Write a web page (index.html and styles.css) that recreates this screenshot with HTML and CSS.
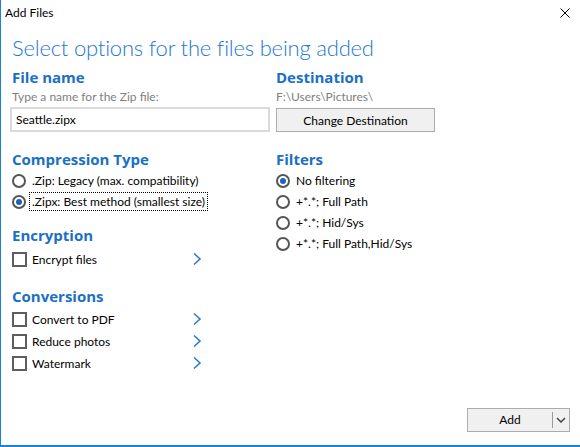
FILE: index.html
```html
<!DOCTYPE html>
<html lang="en">
<head>
  <meta charset="UTF-8">
  <title>Add Files</title>
  <link rel="stylesheet" href="styles.css">
</head>
<body>
  <div class="window">
    <div class="titlebar">
      <span>Add Files</span>
      <svg class="close" width="10" height="10" viewBox="0 0 10 10"><path d="M0.5 0.5 L9.5 9.5 M9.5 0.5 L0.5 9.5" stroke="#000" stroke-width="1" fill="none"/></svg>
    </div>

    <div class="content">
      <h1>Select options for the files being added</h1>

      <div class="grid">
        <div class="cell">
          <div class="label">File name</div>
          <div class="hint">Type a name for the Zip file:</div>
          <input class="textbox" type="text" value="Seattle.zipx">
        </div>
        <div class="cell">
          <div class="label">Destination</div>
          <div class="hint">F:\Users\Pictures\</div>
          <button class="btn">Change Destination</button>
        </div>

        <div class="cell section">
          <div class="label">Compression Type</div>
          <div class="options">
            <div class="row"><span class="radio"></span><span class="text">.Zip: Legacy (max. compatibility)</span></div>
            <div class="row"><span class="radio checked"></span><span class="text focus">.Zipx: Best method (smallest size)</span></div>
          </div>

          <div class="label block-gap">Encryption</div>
          <div class="checks">
            <div class="row check-row">
              <span class="check"></span><span class="text">Encrypt files</span>
              <svg class="chev" width="10" height="14" viewBox="0 0 10 14"><path d="M2 1.5 L8 7 L2 12.5" stroke="#2e7bcf" stroke-width="1.6" fill="none"/></svg>
            </div>
          </div>

          <div class="label block-gap2">Conversions</div>
          <div class="checks tight">
            <div class="row check-row">
              <span class="check"></span><span class="text">Convert to PDF</span>
              <svg class="chev" width="10" height="14" viewBox="0 0 10 14"><path d="M2 1.5 L8 7 L2 12.5" stroke="#2e7bcf" stroke-width="1.6" fill="none"/></svg>
            </div>
            <div class="row check-row">
              <span class="check"></span><span class="text">Reduce photos</span>
              <svg class="chev" width="10" height="14" viewBox="0 0 10 14"><path d="M2 1.5 L8 7 L2 12.5" stroke="#2e7bcf" stroke-width="1.6" fill="none"/></svg>
            </div>
            <div class="row check-row">
              <span class="check"></span><span class="text">Watermark</span>
              <svg class="chev" width="10" height="14" viewBox="0 0 10 14"><path d="M2 1.5 L8 7 L2 12.5" stroke="#2e7bcf" stroke-width="1.6" fill="none"/></svg>
            </div>
          </div>
        </div>

        <div class="cell section">
          <div class="label">Filters</div>
          <div class="options">
            <div class="row"><span class="radio checked"></span><span class="text">No filtering</span></div>
            <div class="row"><span class="radio"></span><span class="text">+*.*; Full Path</span></div>
            <div class="row"><span class="radio"></span><span class="text">+*.*; Hid/Sys</span></div>
            <div class="row"><span class="radio"></span><span class="text">+*.*; Full Path,Hid/Sys</span></div>
          </div>
        </div>
      </div>
    </div>

    <div class="footer">
      <div class="split-btn">
        <span class="main">Add</span>
        <span class="divider"></span>
        <span class="drop"><svg width="10" height="6" viewBox="0 0 10 6"><path d="M1 1 L5 5 L9 1" stroke="#444" stroke-width="1.5" fill="none"/></svg></span>
      </div>
    </div>
  </div>
</body>
</html>
```

FILE: styles.css
```css
body {
  margin: 0;
  font-family: Lato, "Noto Sans", sans-serif;
  font-size: 12px;
  color: #000;
  background: #fff;
}

.window {
  width: 580px;
  height: 447px;
  box-sizing: border-box;
  border-left: 1px solid #1883d7;
  border-bottom: 2px solid #1883d7;
  display: flex;
  flex-direction: column;
}

.titlebar {
  height: 25px;
  line-height: 25px;
  padding-left: 4px;
  display: flex;
  justify-content: space-between;
  align-items: center;
}

.close {
  margin-right: 10px;
}

.content {
  flex: 1;
  padding-left: 11px;
}

h1 {
  margin: 9px 0 0;
  font-size: 22px;
  font-weight: 300;
  line-height: 28px;
  letter-spacing: -0.2px;
  color: #1d78d2;
}

.grid {
  display: grid;
  grid-template-columns: 264px 1fr;
  margin-top: 6px;
}

.label {
  font-family: "Open Sans", "Noto Sans", sans-serif;
  font-size: 15px;
  font-weight: 700;
  line-height: 18px;
  color: #1a6fc6;
}

.hint {
  margin-top: 3px;
  color: #808080;
  line-height: 16px;
}

.textbox {
  display: block;
  margin: 2px 0 0 -2px;
  width: 260px;
  height: 25px;
  box-sizing: border-box;
  border: 2px solid #dadada;
  padding: 0 4px;
  font: inherit;
  color: #000;
  outline: none;
}

.btn {
  display: block;
  margin-top: 3px;
  width: 159px;
  height: 24px;
  box-sizing: border-box;
  border: 1px solid #adadad;
  background: #f0f0f0;
  font: inherit;
  color: #000;
  padding: 0;
}

.section {
  margin-top: 18px;
}

.options {
  margin-top: 2px;
}

.row {
  display: flex;
  align-items: center;
  height: 21px;
}

.radio {
  width: 14px;
  height: 14px;
  box-sizing: border-box;
  border: 2px solid #555;
  border-radius: 50%;
  margin-right: 3px;
  display: flex;
  align-items: center;
  justify-content: center;
  flex-shrink: 0;
}

.radio.checked::after {
  content: "";
  width: 6px;
  height: 6px;
  border-radius: 50%;
  background: #1a62c2;
}

.text {
  border: 1px dotted transparent;
  padding: 0 2px;
  line-height: 17px;
}

.text.focus {
  border-color: #000;
}

.block-gap {
  margin-top: 14px;
}

.block-gap2 {
  margin-top: 17px;
}

.checks {
  margin-top: 4px;
}

.checks.tight {
  margin-top: 3px;
}

.check-row {
  height: 22px;
  width: 190px;
}

.check {
  width: 15px;
  height: 15px;
  box-sizing: border-box;
  border: 2px solid #5e5e5e;
  margin-right: 2px;
  flex-shrink: 0;
}

.check-row .text {
  flex: 1;
}

.footer {
  display: flex;
  justify-content: flex-end;
  padding: 0 10px 13px 0;
}

.split-btn {
  display: flex;
  height: 24px;
  box-sizing: border-box;
  border: 1px solid #adadad;
  background: #f0f0f0;
}

.split-btn .main {
  width: 84px;
  text-align: center;
  line-height: 22px;
}

.divider {
  width: 1px;
  margin: 3px 0;
  background: #9a9a9a;
}

.drop {
  width: 16px;
  display: flex;
  align-items: center;
  justify-content: center;
}
```
